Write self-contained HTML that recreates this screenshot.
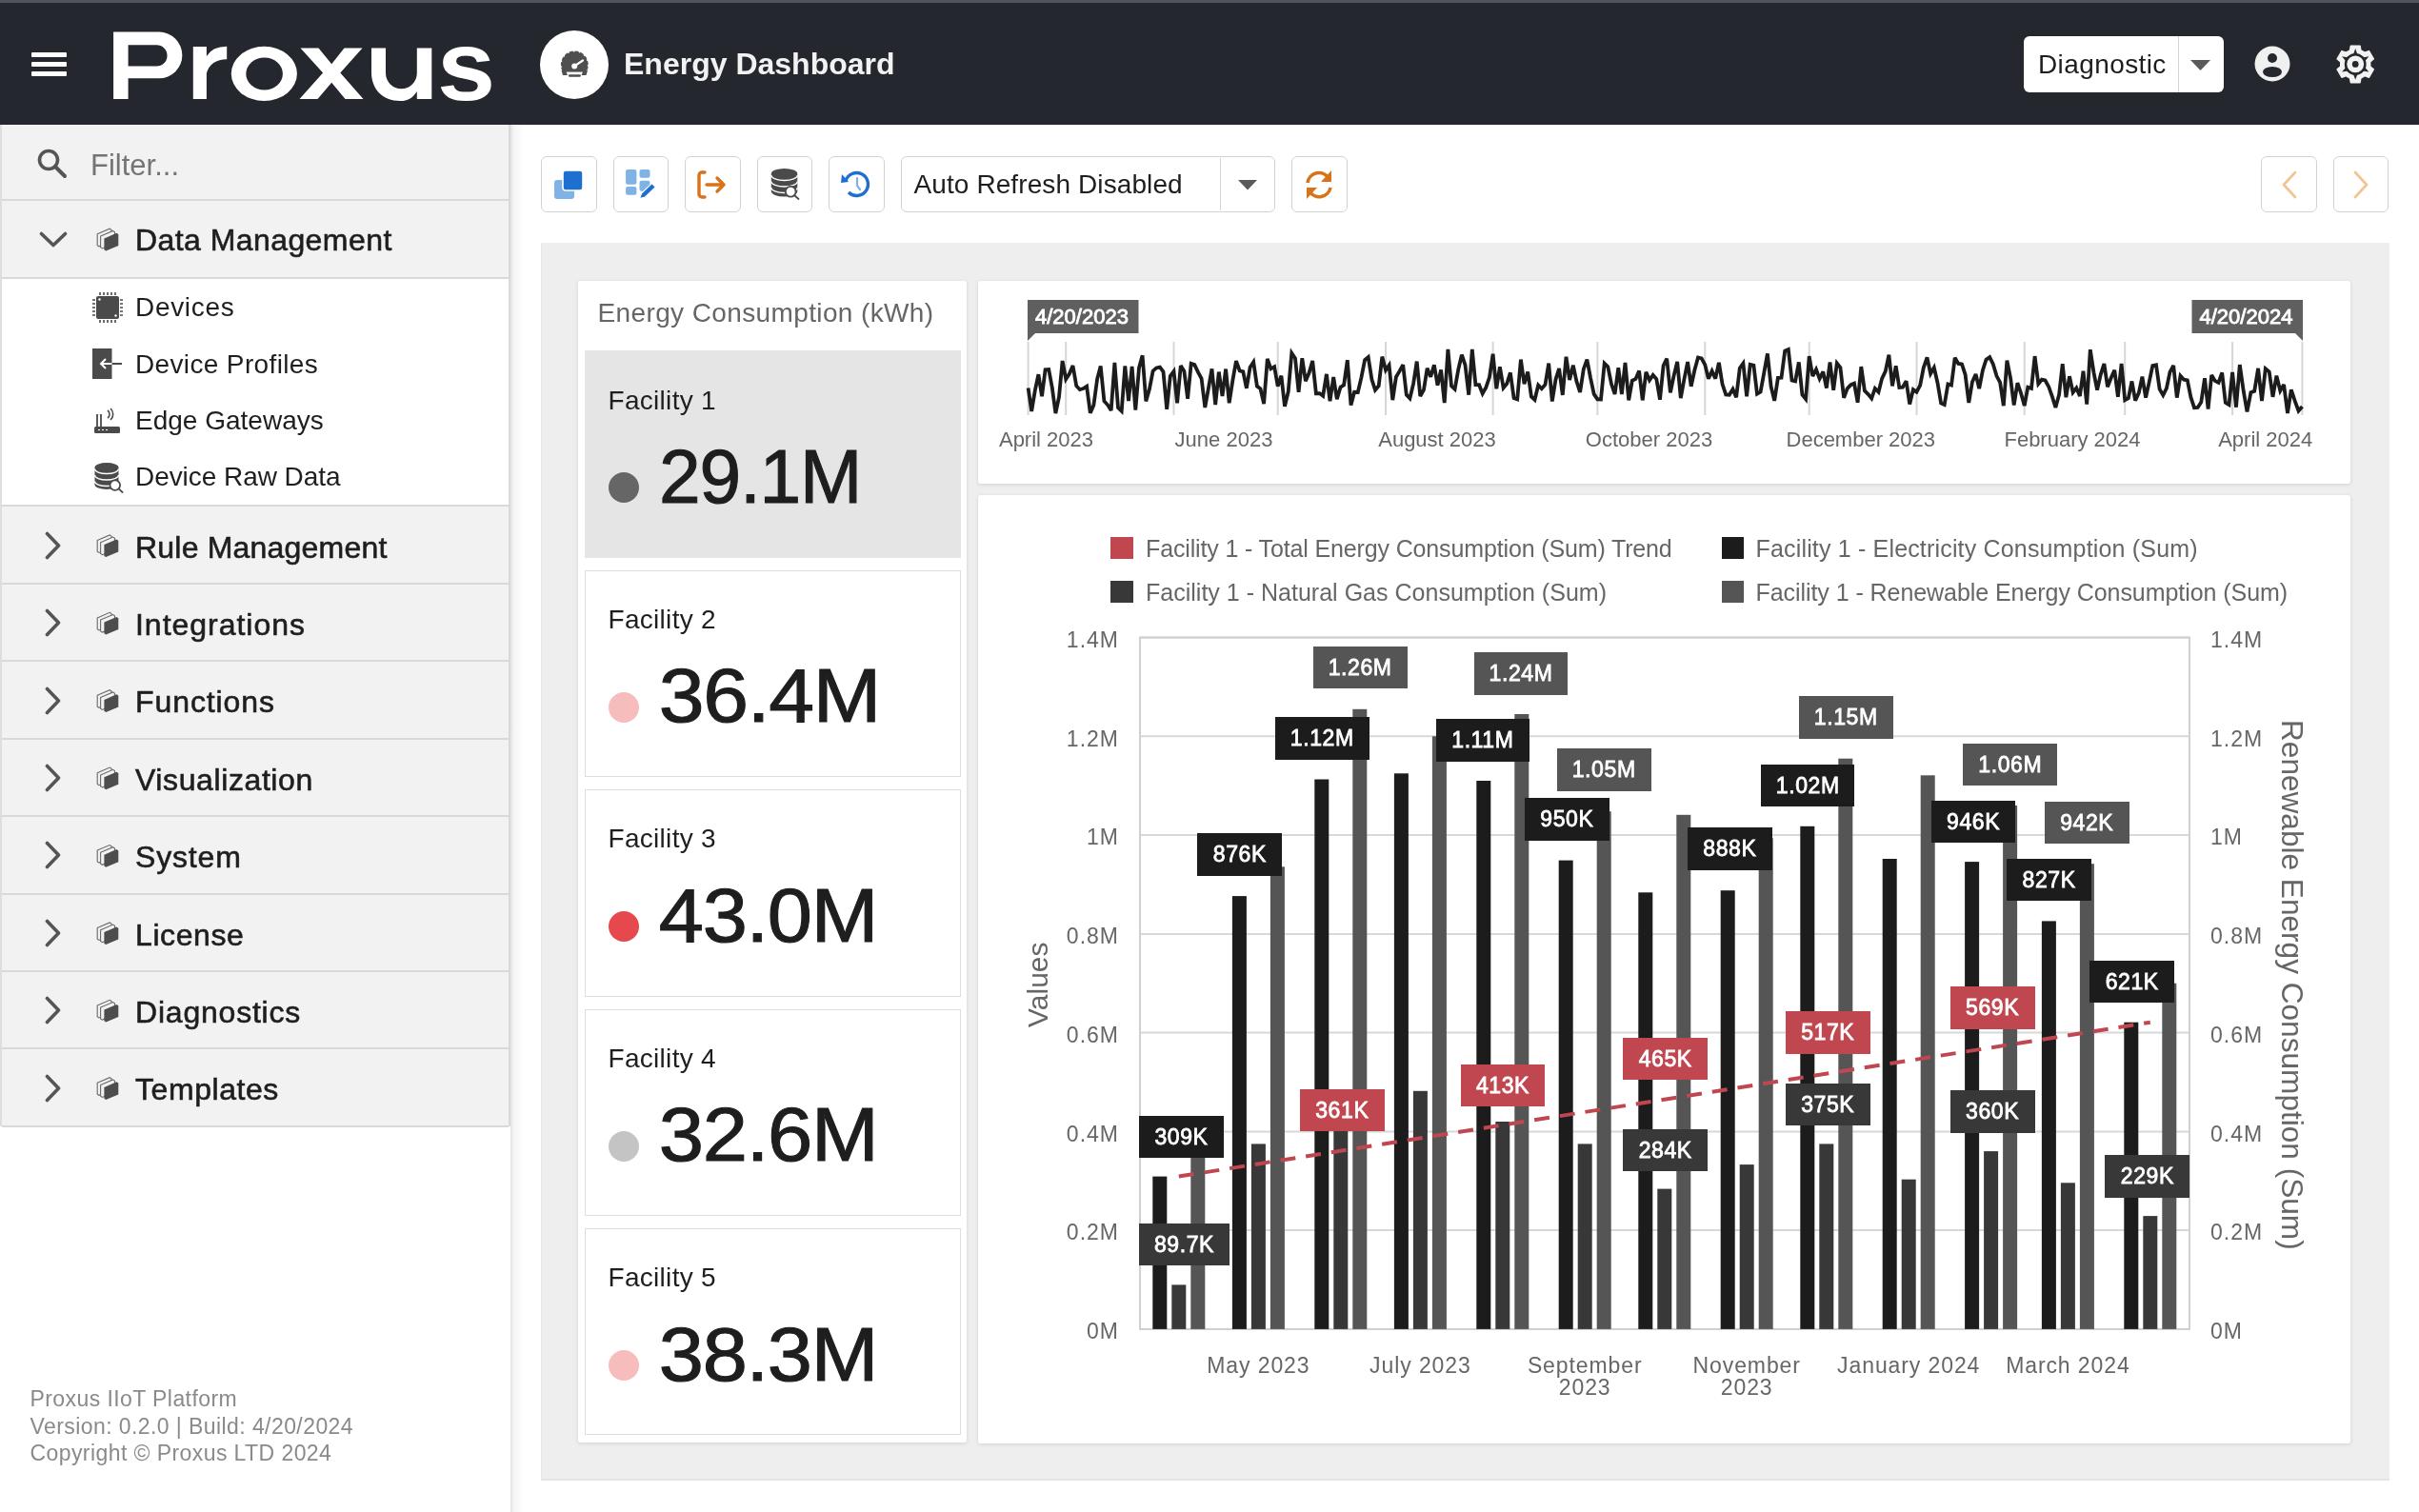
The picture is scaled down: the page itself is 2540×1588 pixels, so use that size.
<!DOCTYPE html><html><head><meta charset="utf-8"><style>
*{box-sizing:border-box;margin:0;padding:0}
html,body{width:2540px;height:1588px;overflow:hidden;background:#fff;font-family:"Liberation Sans",sans-serif}
.a{position:absolute}
.t{position:absolute;white-space:nowrap;line-height:1}
body{-webkit-font-smoothing:antialiased}
#root{position:absolute;left:0;top:0;width:2540px;height:1588px;will-change:transform}
</style></head><body><div id="root"><div class="a" style="left:0;top:0;width:2540px;height:131px;background:#24282e"></div>
<div class="a" style="left:0;top:0;width:2540px;height:2.5px;background:#50555c"></div>
<div class="a" style="left:33px;top:55px;width:37px;height:5px;background:#fff;border-radius:1px"></div>
<div class="a" style="left:33px;top:65px;width:37px;height:5px;background:#fff;border-radius:1px"></div>
<div class="a" style="left:33px;top:75px;width:37px;height:5px;background:#fff;border-radius:1px"></div>
<svg class="a" style="left:0;top:0" width="540" height="131" viewBox="0 0 540 131">
<path fill="#fff" fill-rule="evenodd" d="M119.1 33.6H167A24.35 24.35 0 0 1 167 82.3H134.6V104.1H119.1Z M134.6 47.3H164.4A11.15 11.15 0 0 1 164.4 69.6H134.6Z"/>
<path fill="#fff" d="M202.8 49.1H216.9V59Q223 48.8 238.2 48.8V62.3Q221 62.5 216.9 77V104.1H202.8Z"/>
<path fill="#fff" fill-rule="evenodd" d="M242.8 77.4A34.55 28.6 0 1 0 311.9 77.4A34.55 28.6 0 1 0 242.8 77.4Z M258.3 77.55A19.3 17.05 0 1 0 296.9 77.55A19.3 17.05 0 1 0 258.3 77.55Z"/>
<path fill="#fff" d="M315.5 50.5H334.5L348.2 67.3L361.5 50.5H380.5L357.3 76.6L381.5 104.1H362.5L348.2 86.8L333.5 104.1H314.5L339.1 76.6Z"/>
<path fill="#fff" d="M390 50.5H405V76.8A16.4 16.4 0 0 0 437.8 76.8V50.5H453.3V104.1H437.8V96C433 103.5 428 106 420.5 106C401 106 390 93 390 76Z"/>
<text x="0" y="0" font-family="Liberation Sans" font-weight="700" font-size="100" fill="#fff" transform="matrix(1.1 0 0 1.044 458.95 105.06)">s</text>
</svg>
<div class="a" style="left:567px;top:31.5px;width:72px;height:72px;border-radius:50%;background:#fff"></div>
<svg class="a" style="left:580px;top:45px" width="50" height="45" viewBox="580 45 50 45">
<circle cx="603.3" cy="68" r="14.4" fill="#4f4f4f"/>
<circle cx="603.3" cy="68" r="14.4" fill="none" stroke="#fff" stroke-width="1.6" stroke-dasharray="1.6 4.4"/>
<rect x="594" y="75.6" width="19" height="20" fill="#fff"/>
<path d="M589.5 74 L594 74 L596 79 L591 79Z M617 74 L612.5 74 L610.5 79 L615.5 79Z" fill="#4f4f4f"/>
<rect x="597" y="78.2" width="12.8" height="2.6" rx="1" fill="#4f4f4f"/>
<circle cx="603.2" cy="69.4" r="3" fill="#fff"/><path d="M603.2 69.4 L612 63.5" stroke="#fff" stroke-width="2.2" stroke-linecap="round"/>
</svg>
<div class="t" style="left:655.0px;top:51.2px;font-size:32px;color:#f2f2f2;font-weight:700;letter-spacing:0px;">Energy Dashboard</div>
<div class="a" style="left:2124.5px;top:38px;width:210px;height:59px;border-radius:6px;background:#fff"></div>
<div class="a" style="left:2286.5px;top:38px;width:1.5px;height:59px;background:#d5d5d5"></div>
<svg class="a" style="left:2300px;top:63px" width="21" height="11"><path d="M0 0H21L10.5 11Z" fill="#5a5a5a"/></svg>
<div class="t" style="left:2140.0px;top:53.6px;font-size:28px;color:#1e1e1e;font-weight:400;letter-spacing:0.4px;">Diagnostic</div>
<svg class="a" style="left:2366px;top:47px" width="40" height="40" viewBox="0 0 40 40">
<circle cx="20" cy="20" r="18.5" fill="#f0f0f0"/>
<circle cx="20" cy="14" r="5" fill="#24282e"/>
<ellipse cx="20" cy="28.5" rx="10" ry="5.5" fill="#24282e"/></svg>
<svg class="a" style="left:2448px;top:42px" width="50" height="50" viewBox="2448 42 50 50">
<path d="M2467.61 52.84 L2468.41 48.19 L2477.99 48.19 L2478.79 52.84 L2483.02 55.28 L2487.44 53.65 L2492.23 61.94 L2488.61 64.96 L2488.61 69.84 L2492.23 72.86 L2487.44 81.15 L2483.02 79.52 L2478.79 81.96 L2477.99 86.61 L2468.41 86.61 L2467.61 81.96 L2463.38 79.52 L2458.96 81.15 L2454.17 72.86 L2457.79 69.84 L2457.79 64.96 L2454.17 61.94 L2458.96 53.65 L2463.38 55.28Z" fill="#f2f2f2" stroke="#f2f2f2" stroke-width="1.6" stroke-linejoin="round"/>
<circle cx="2473.2" cy="67.4" r="11.4" fill="#24282e"/><path d="M2475.50 57.40 L2473.20 51.10 L2470.90 57.40Z M2483.01 64.39 L2487.32 59.25 L2480.71 60.41Z M2480.71 74.39 L2487.32 75.55 L2483.01 70.41Z M2470.90 77.40 L2473.20 83.70 L2475.50 77.40Z M2463.39 70.41 L2459.08 75.55 L2465.69 74.39Z M2465.69 60.41 L2459.08 59.25 L2463.39 64.39Z " fill="#24282e"/>
<circle cx="2473.2" cy="67.4" r="8.9" fill="#f2f2f2"/><circle cx="2473.2" cy="67.4" r="3.4" fill="#24282e"/>
</svg>
<div class="a" style="left:0;top:131px;width:538px;height:1457px;background:#fff"></div>
<div class="a" style="left:538px;top:131px;width:11px;height:1457px;background:linear-gradient(90deg,#f1f1f1,#f7f7f7 35%,#fdfdfd 90%,#fff)"></div>
<div class="a" style="left:536px;top:131px;width:2px;height:1457px;background:#e6e6e6"></div>
<div class="a" style="left:0;top:131px;width:536px;height:1052px;background:#f2f2f2;border-left:2px solid #dedede;border-right:2px solid #d9d9d9"></div>
<svg class="a" style="left:38px;top:155px" width="34" height="34" viewBox="0 0 34 34">
<circle cx="13" cy="13" r="9.5" fill="none" stroke="#555" stroke-width="3.6"/>
<path d="M20 20 L30 30" stroke="#555" stroke-width="4" stroke-linecap="round"/></svg>
<div class="t" style="left:95.0px;top:157.8px;font-size:31px;color:#747474;font-weight:400;letter-spacing:0px;">Filter...</div>
<div class="a" style="left:2px;top:209px;width:532px;height:2px;background:#d9d9d9"></div>
<svg class="a" style="left:41px;top:243px" width="30" height="18" viewBox="0 0 30 18"><path d="M2.5 2.5 L15 14.5 L27.5 2.5" fill="none" stroke="#555" stroke-width="3.6" stroke-linecap="round" stroke-linejoin="round"/></svg>
<svg class="a" style="left:0;top:0;overflow:visible" width="1" height="1">
<polygon points="102.2,245.8 115.2,240.2 117.1,241.5 117.1,253.3 104.0,258.8 102.2,257.6" fill="#f2f2f2" stroke="#6a6a6a" stroke-width="1.1"/>
<polygon points="105.6,248.0 118.6,242.4 120.5,243.7 120.5,255.5 107.4,261.0 105.6,259.8" fill="#f2f2f2" stroke="#6a6a6a" stroke-width="1.1"/>
<polygon points="109.4,250.4 122.4,244.8 124.3,246.1 124.3,257.9 111.2,263.4 109.4,262.2" fill="#4d4d4d"/></svg>
<div class="t" style="left:142.0px;top:236.2px;font-size:32px;color:#1e1e1e;font-weight:400;letter-spacing:0.429px;-webkit-text-stroke:0.6px #1e1e1e">Data Management</div>
<div class="a" style="left:2px;top:291px;width:532px;height:2px;background:#d9d9d9"></div>
<div class="a" style="left:2px;top:293px;width:532px;height:238px;background:#fff"></div>
<div class="a" style="left:2px;top:530px;width:532px;height:2px;background:#d9d9d9"></div>
<svg class="a" style="left:97px;top:307px" width="32" height="32" viewBox="0 0 32 32"><rect x="4" y="4" width="24" height="24" rx="2" fill="#4a4a4a"/>
 <g stroke="#4a4a4a" stroke-width="1.6"><path d="M8 0V3M8 29V32M0 8H3M29 8H32"/><path d="M12 0V3M12 29V32M0 12H3M29 12H32"/><path d="M16 0V3M16 29V32M0 16H3M29 16H32"/><path d="M20 0V3M20 29V32M0 20H3M29 20H32"/><path d="M24 0V3M24 29V32M0 24H3M29 24H32"/></g>
 <circle cx="7.5" cy="7.5" r="1.2" fill="#fff"/><circle cx="24.5" cy="24.5" r="1.2" fill="#fff"/></svg>
<div class="t" style="left:142.0px;top:309.1px;font-size:28px;color:#1e1e1e;font-weight:400;letter-spacing:0.683px;">Devices</div>
<svg class="a" style="left:97px;top:366px" width="32" height="34" viewBox="0 0 32 34"><rect x="0" y="0" width="20.5" height="32" fill="#4a4a4a"/>
 <path d="M30 16H9M14 11L9 16L14 21" fill="none" stroke="#fff" stroke-width="2"/><path d="M20.5 16H31" stroke="#4a4a4a" stroke-width="2"/></svg>
<div class="t" style="left:142.0px;top:368.5px;font-size:28px;color:#1e1e1e;font-weight:400;letter-spacing:0.357px;">Device Profiles</div>
<svg class="a" style="left:98px;top:428px" width="30" height="30" viewBox="0 0 30 30"><rect x="1" y="20" width="27" height="7" rx="1.5" fill="#4a4a4a"/>
 <path d="M4 20V7M8 20V7" stroke="#4a4a4a" stroke-width="1.8"/><path d="M15 3 a5 5 0 0 1 0 8 M18 1 a8 8 0 0 1 0 12" fill="none" stroke="#4a4a4a" stroke-width="1.6"/>
 <path d="M5 23.5h2M9 23.5h2M13 23.5h2" stroke="#fff" stroke-width="1.2"/></svg>
<div class="t" style="left:142.0px;top:427.7px;font-size:28px;color:#1e1e1e;font-weight:400;letter-spacing:0.008px;">Edge Gateways</div>
<svg class="a" style="left:98px;top:485px" width="34" height="34" viewBox="0 0 34 34">
 <path d="M1.5 6a12.5 5 0 0 1 25 0V24a12.5 5 0 0 1-25 0Z" fill="#4a4a4a"/>
 <path d="M1.5 7.5a12.5 5 0 0 0 25 0M1.5 14a12.5 5 0 0 0 25 0M1.5 20.5a12.5 5 0 0 0 25 0" fill="none" stroke="#fff" stroke-width="1.3"/>
 <circle cx="22.8" cy="24.6" r="5.3" fill="#fff" stroke="#4a4a4a" stroke-width="1.8"/><path d="M26.6 28.4L30.6 32" stroke="#4a4a4a" stroke-width="1.8" stroke-linecap="round"/></svg>
<div class="t" style="left:142.0px;top:487.4px;font-size:28px;color:#1e1e1e;font-weight:400;letter-spacing:-0.057px;">Device Raw Data</div>
<svg class="a" style="left:47px;top:557.7px" width="18" height="30" viewBox="0 0 18 30"><path d="M2.5 2.5 L14.5 15 L2.5 27.5" fill="none" stroke="#555" stroke-width="3.6" stroke-linecap="round" stroke-linejoin="round"/></svg>
<svg class="a" style="left:0;top:0;overflow:visible" width="1" height="1">
<polygon points="102.2,567.5 115.2,561.9 117.1,563.2 117.1,575.0 104.0,580.5 102.2,579.3" fill="#f2f2f2" stroke="#6a6a6a" stroke-width="1.1"/>
<polygon points="105.6,569.7 118.6,564.1 120.5,565.4 120.5,577.2 107.4,582.7 105.6,581.5" fill="#f2f2f2" stroke="#6a6a6a" stroke-width="1.1"/>
<polygon points="109.4,572.1 122.4,566.5 124.3,567.8 124.3,579.6 111.2,585.1 109.4,583.9" fill="#4d4d4d"/></svg>
<div class="t" style="left:142.0px;top:558.6px;font-size:32px;color:#1e1e1e;font-weight:400;letter-spacing:0.207px;-webkit-text-stroke:0.6px #1e1e1e">Rule Management</div>
<div class="a" style="left:2px;top:611.9px;width:532px;height:2px;background:#d9d9d9"></div>
<svg class="a" style="left:47px;top:639.1px" width="18" height="30" viewBox="0 0 18 30"><path d="M2.5 2.5 L14.5 15 L2.5 27.5" fill="none" stroke="#555" stroke-width="3.6" stroke-linecap="round" stroke-linejoin="round"/></svg>
<svg class="a" style="left:0;top:0;overflow:visible" width="1" height="1">
<polygon points="102.2,648.9 115.2,643.3 117.1,644.6 117.1,656.4 104.0,661.9 102.2,660.7" fill="#f2f2f2" stroke="#6a6a6a" stroke-width="1.1"/>
<polygon points="105.6,651.1 118.6,645.5 120.5,646.8 120.5,658.6 107.4,664.1 105.6,662.9" fill="#f2f2f2" stroke="#6a6a6a" stroke-width="1.1"/>
<polygon points="109.4,653.5 122.4,647.9 124.3,649.2 124.3,661.0 111.2,666.5 109.4,665.3" fill="#4d4d4d"/></svg>
<div class="t" style="left:142.0px;top:640.0px;font-size:32px;color:#1e1e1e;font-weight:400;letter-spacing:0.973px;-webkit-text-stroke:0.6px #1e1e1e">Integrations</div>
<div class="a" style="left:2px;top:693.3px;width:532px;height:2px;background:#d9d9d9"></div>
<svg class="a" style="left:47px;top:720.5px" width="18" height="30" viewBox="0 0 18 30"><path d="M2.5 2.5 L14.5 15 L2.5 27.5" fill="none" stroke="#555" stroke-width="3.6" stroke-linecap="round" stroke-linejoin="round"/></svg>
<svg class="a" style="left:0;top:0;overflow:visible" width="1" height="1">
<polygon points="102.2,730.3 115.2,724.7 117.1,726.0 117.1,737.8 104.0,743.3 102.2,742.1" fill="#f2f2f2" stroke="#6a6a6a" stroke-width="1.1"/>
<polygon points="105.6,732.5 118.6,726.9 120.5,728.2 120.5,740.0 107.4,745.5 105.6,744.3" fill="#f2f2f2" stroke="#6a6a6a" stroke-width="1.1"/>
<polygon points="109.4,734.9 122.4,729.3 124.3,730.6 124.3,742.4 111.2,747.9 109.4,746.7" fill="#4d4d4d"/></svg>
<div class="t" style="left:142.0px;top:721.4px;font-size:32px;color:#1e1e1e;font-weight:400;letter-spacing:0.912px;-webkit-text-stroke:0.6px #1e1e1e">Functions</div>
<div class="a" style="left:2px;top:774.7px;width:532px;height:2px;background:#d9d9d9"></div>
<svg class="a" style="left:47px;top:801.9px" width="18" height="30" viewBox="0 0 18 30"><path d="M2.5 2.5 L14.5 15 L2.5 27.5" fill="none" stroke="#555" stroke-width="3.6" stroke-linecap="round" stroke-linejoin="round"/></svg>
<svg class="a" style="left:0;top:0;overflow:visible" width="1" height="1">
<polygon points="102.2,811.7 115.2,806.1 117.1,807.4 117.1,819.2 104.0,824.7 102.2,823.5" fill="#f2f2f2" stroke="#6a6a6a" stroke-width="1.1"/>
<polygon points="105.6,813.9 118.6,808.3 120.5,809.6 120.5,821.4 107.4,826.9 105.6,825.7" fill="#f2f2f2" stroke="#6a6a6a" stroke-width="1.1"/>
<polygon points="109.4,816.3 122.4,810.7 124.3,812.0 124.3,823.8 111.2,829.3 109.4,828.1" fill="#4d4d4d"/></svg>
<div class="t" style="left:142.0px;top:802.8px;font-size:32px;color:#1e1e1e;font-weight:400;letter-spacing:0.6px;-webkit-text-stroke:0.6px #1e1e1e">Visualization</div>
<div class="a" style="left:2px;top:856.1px;width:532px;height:2px;background:#d9d9d9"></div>
<svg class="a" style="left:47px;top:883.3px" width="18" height="30" viewBox="0 0 18 30"><path d="M2.5 2.5 L14.5 15 L2.5 27.5" fill="none" stroke="#555" stroke-width="3.6" stroke-linecap="round" stroke-linejoin="round"/></svg>
<svg class="a" style="left:0;top:0;overflow:visible" width="1" height="1">
<polygon points="102.2,893.1 115.2,887.5 117.1,888.8 117.1,900.6 104.0,906.1 102.2,904.9" fill="#f2f2f2" stroke="#6a6a6a" stroke-width="1.1"/>
<polygon points="105.6,895.3 118.6,889.7 120.5,891.0 120.5,902.8 107.4,908.3 105.6,907.1" fill="#f2f2f2" stroke="#6a6a6a" stroke-width="1.1"/>
<polygon points="109.4,897.7 122.4,892.1 124.3,893.4 124.3,905.2 111.2,910.7 109.4,909.5" fill="#4d4d4d"/></svg>
<div class="t" style="left:142.0px;top:884.2px;font-size:32px;color:#1e1e1e;font-weight:400;letter-spacing:0.84px;-webkit-text-stroke:0.6px #1e1e1e">System</div>
<div class="a" style="left:2px;top:937.5px;width:532px;height:2px;background:#d9d9d9"></div>
<svg class="a" style="left:47px;top:964.6999999999999px" width="18" height="30" viewBox="0 0 18 30"><path d="M2.5 2.5 L14.5 15 L2.5 27.5" fill="none" stroke="#555" stroke-width="3.6" stroke-linecap="round" stroke-linejoin="round"/></svg>
<svg class="a" style="left:0;top:0;overflow:visible" width="1" height="1">
<polygon points="102.2,974.5 115.2,968.9 117.1,970.2 117.1,982.0 104.0,987.5 102.2,986.3" fill="#f2f2f2" stroke="#6a6a6a" stroke-width="1.1"/>
<polygon points="105.6,976.7 118.6,971.1 120.5,972.4 120.5,984.2 107.4,989.7 105.6,988.5" fill="#f2f2f2" stroke="#6a6a6a" stroke-width="1.1"/>
<polygon points="109.4,979.1 122.4,973.5 124.3,974.8 124.3,986.6 111.2,992.1 109.4,990.9" fill="#4d4d4d"/></svg>
<div class="t" style="left:142.0px;top:965.6px;font-size:32px;color:#1e1e1e;font-weight:400;letter-spacing:0.6px;-webkit-text-stroke:0.6px #1e1e1e">License</div>
<div class="a" style="left:2px;top:1018.9px;width:532px;height:2px;background:#d9d9d9"></div>
<svg class="a" style="left:47px;top:1046.1px" width="18" height="30" viewBox="0 0 18 30"><path d="M2.5 2.5 L14.5 15 L2.5 27.5" fill="none" stroke="#555" stroke-width="3.6" stroke-linecap="round" stroke-linejoin="round"/></svg>
<svg class="a" style="left:0;top:0;overflow:visible" width="1" height="1">
<polygon points="102.2,1055.9 115.2,1050.3 117.1,1051.6 117.1,1063.4 104.0,1068.9 102.2,1067.7" fill="#f2f2f2" stroke="#6a6a6a" stroke-width="1.1"/>
<polygon points="105.6,1058.1 118.6,1052.5 120.5,1053.8 120.5,1065.6 107.4,1071.1 105.6,1069.9" fill="#f2f2f2" stroke="#6a6a6a" stroke-width="1.1"/>
<polygon points="109.4,1060.5 122.4,1054.9 124.3,1056.2 124.3,1068.0 111.2,1073.5 109.4,1072.3" fill="#4d4d4d"/></svg>
<div class="t" style="left:142.0px;top:1047.0px;font-size:32px;color:#1e1e1e;font-weight:400;letter-spacing:0.79px;-webkit-text-stroke:0.6px #1e1e1e">Diagnostics</div>
<div class="a" style="left:2px;top:1100.3px;width:532px;height:2px;background:#d9d9d9"></div>
<svg class="a" style="left:47px;top:1127.5px" width="18" height="30" viewBox="0 0 18 30"><path d="M2.5 2.5 L14.5 15 L2.5 27.5" fill="none" stroke="#555" stroke-width="3.6" stroke-linecap="round" stroke-linejoin="round"/></svg>
<svg class="a" style="left:0;top:0;overflow:visible" width="1" height="1">
<polygon points="102.2,1137.3 115.2,1131.7 117.1,1133.0 117.1,1144.8 104.0,1150.3 102.2,1149.1" fill="#f2f2f2" stroke="#6a6a6a" stroke-width="1.1"/>
<polygon points="105.6,1139.5 118.6,1133.9 120.5,1135.2 120.5,1147.0 107.4,1152.5 105.6,1151.3" fill="#f2f2f2" stroke="#6a6a6a" stroke-width="1.1"/>
<polygon points="109.4,1141.9 122.4,1136.3 124.3,1137.6 124.3,1149.4 111.2,1154.9 109.4,1153.7" fill="#4d4d4d"/></svg>
<div class="t" style="left:142.0px;top:1128.4px;font-size:32px;color:#1e1e1e;font-weight:400;letter-spacing:0.562px;-webkit-text-stroke:0.6px #1e1e1e">Templates</div>
<div class="a" style="left:2px;top:1181.7px;width:532px;height:2px;background:#d9d9d9"></div>
<div class="t" style="left:31.5px;top:1458.3px;font-size:23px;color:#8a8a8a;font-weight:400;letter-spacing:0.42px;">Proxus IIoT Platform</div>
<div class="t" style="left:31.5px;top:1486.5px;font-size:23px;color:#8a8a8a;font-weight:400;letter-spacing:0.42px;">Version: 0.2.0 | Build: 4/20/2024</div>
<div class="t" style="left:31.5px;top:1514.7px;font-size:23px;color:#8a8a8a;font-weight:400;letter-spacing:0.42px;">Copyright © Proxus LTD 2024</div>
<div class="a" style="left:568px;top:164.3px;width:58.5px;height:58.5px;border:1.8px solid #d2d2d2;border-radius:6px;background:#fff"></div>
<div class="a" style="left:643.5px;top:164.3px;width:58.5px;height:58.5px;border:1.8px solid #d2d2d2;border-radius:6px;background:#fff"></div>
<div class="a" style="left:719px;top:164.3px;width:58.5px;height:58.5px;border:1.8px solid #d2d2d2;border-radius:6px;background:#fff"></div>
<div class="a" style="left:794.5px;top:164.3px;width:58.5px;height:58.5px;border:1.8px solid #d2d2d2;border-radius:6px;background:#fff"></div>
<div class="a" style="left:870px;top:164.3px;width:58.5px;height:58.5px;border:1.8px solid #d2d2d2;border-radius:6px;background:#fff"></div>
<svg class="a" style="left:580px;top:177px" width="34" height="34" viewBox="0 0 34 34">
<rect x="2" y="12" width="21" height="20" rx="3" fill="#7fb2e5"/><rect x="11" y="2" width="21" height="21" rx="3" fill="#1e6fd0" stroke="#fff" stroke-width="1.6"/>
<rect x="9" y="10" width="25" height="15" fill="none"/></svg>
<svg class="a" style="left:656px;top:177px" width="36" height="36" viewBox="0 0 36 36">
<rect x="1.1" y="1" width="11.3" height="15.8" rx="2" fill="#7fb2e5"/><rect x="1.1" y="19.1" width="11.3" height="8.7" rx="2" fill="#7fb2e5"/>
<rect x="15.5" y="1" width="11" height="8.7" rx="2" fill="#7fb2e5"/><rect x="15.5" y="12.8" width="11" height="11" rx="2" fill="#7fb2e5"/>
<path d="M15.5 31.5 L17.5 26 L28.5 15.5 L32.5 19.5 L21.5 30Z" fill="#1e6fd0" stroke="#fff" stroke-width="1.2"/></svg>
<svg class="a" style="left:731px;top:178px" width="34" height="32" viewBox="0 0 34 32">
<path d="M9 3H6a3 3 0 0 0-3 3v20a3 3 0 0 0 3 3h3" fill="none" stroke="#d9731a" stroke-width="3.4" stroke-linecap="round"/>
<path d="M11 16H29M22 9L29 16L22 23" fill="none" stroke="#d9731a" stroke-width="3.4" stroke-linecap="round" stroke-linejoin="round"/></svg>
<svg class="a" style="left:807px;top:175px" width="36" height="36" viewBox="0 0 36 36">
 <path d="M2.8 7.5a13.75 5.5 0 0 1 27.5 0V26a13.75 5.5 0 0 1-27.5 0Z" fill="#4a4a4a"/>
 <path d="M2.8 9a13.75 5.5 0 0 0 27.5 0M2.8 15.5a13.75 5.5 0 0 0 27.5 0M2.8 22a13.75 5.5 0 0 0 27.5 0" fill="none" stroke="#fff" stroke-width="1.4"/>
 <circle cx="23.2" cy="26.2" r="5.4" fill="#fff" stroke="#4a4a4a" stroke-width="1.8"/><path d="M27 30L31.5 34" stroke="#4a4a4a" stroke-width="1.8" stroke-linecap="round"/></svg>
<svg class="a" style="left:882px;top:177px" width="34" height="34" viewBox="0 0 34 34">
<path d="M6 13 A12 12 0 1 1 9 25" fill="none" stroke="#1e6fd0" stroke-width="3.4"/>
<path d="M2 6 L9 14 L1 15Z" fill="#1e6fd0"/>
<path d="M18 10V18L21 22" fill="none" stroke="#7fb2e5" stroke-width="2.2" stroke-linecap="round"/></svg>
<div class="a" style="left:945.5px;top:164.3px;width:393px;height:58.5px;border:1.8px solid #d2d2d2;border-radius:6px;background:#fff"></div>
<div class="a" style="left:1280.5px;top:166px;width:1.5px;height:55px;background:#d4d4d4"></div>
<svg class="a" style="left:1299.5px;top:189px" width="20" height="10.5"><path d="M0 0H20L10 10.5Z" fill="#5a5a5a"/></svg>
<div class="t" style="left:959.5px;top:179.5px;font-size:28px;color:#1e1e1e;font-weight:400;letter-spacing:0.1px;">Auto Refresh Disabled</div>
<div class="a" style="left:1356px;top:164.3px;width:58.5px;height:58.5px;border:1.8px solid #d2d2d2;border-radius:6px;background:#fff"></div>
<svg class="a" style="left:1368px;top:178px" width="34" height="32" viewBox="0 0 34 32">
<path d="M5 14 A12 12 0 0 1 27 9" fill="none" stroke="#d9731a" stroke-width="3.6"/>
<path d="M29 19 A12 12 0 0 1 7 23" fill="none" stroke="#d9731a" stroke-width="3.6"/>
<path d="M30 1 V13 H19Z" fill="#d9731a"/><path d="M4 31 V19 H15Z" fill="#d9731a"/></svg>
<div class="a" style="left:2374px;top:164.3px;width:58.5px;height:58.5px;border:1.8px solid #d2d2d2;border-radius:6px;background:#fff"></div>
<div class="a" style="left:2449.5px;top:164.3px;width:58.5px;height:58.5px;border:1.8px solid #d2d2d2;border-radius:6px;background:#fff"></div>
<svg class="a" style="left:2393px;top:178px" width="22" height="32"><path d="M17 3 L5 16 L17 29" fill="none" stroke="#f2c490" stroke-width="2.7" stroke-linecap="round" stroke-linejoin="round"/></svg>
<svg class="a" style="left:2468px;top:178px" width="22" height="32"><path d="M5 3 L17 16 L5 29" fill="none" stroke="#f2c490" stroke-width="2.7" stroke-linecap="round" stroke-linejoin="round"/></svg>
<div class="a" style="left:568px;top:255px;width:1941px;height:1300px;background:#eeeeee;border-bottom:2px solid #e2e3e3;border-left:1.5px solid #e5e5e5"></div>
<div class="a" style="left:607px;top:294.5px;width:408px;height:1220px;background:#fff;border-radius:3px;box-shadow:0 1px 4px rgba(0,0,0,0.12)"></div>
<div class="t" style="left:627.5px;top:315.4px;font-size:28px;color:#666;font-weight:400;letter-spacing:0.38px;">Energy Consumption (kWh)</div>
<div class="a" style="left:613.5px;top:368.3px;width:395px;height:217.5px;background:#e5e5e5"></div>
<div class="t" style="left:638.5px;top:406.6px;font-size:28px;color:#1e1e1e;font-weight:400;letter-spacing:0.3px;">Facility 1</div>
<div class="a" style="left:639px;top:496.3px;width:32px;height:32px;border-radius:50%;background:#666666"></div>
<div class="t" style="left:692.0px;top:460.9px;font-size:80px;color:#1e1e1e;font-weight:400;letter-spacing:-1.2px;-webkit-text-stroke:1.1px #1e1e1e;transform-origin:3px 0;transform:scaleX(0.98)">29.1M</div>
<div class="a" style="left:613.5px;top:598.7px;width:395px;height:217.5px;background:#fff;border:1.5px solid #dedede"></div>
<div class="t" style="left:638.5px;top:637.0px;font-size:28px;color:#1e1e1e;font-weight:400;letter-spacing:0.3px;">Facility 2</div>
<div class="a" style="left:639px;top:726.7px;width:32px;height:32px;border-radius:50%;background:#f7bcbc"></div>
<div class="t" style="left:692.0px;top:691.3px;font-size:80px;color:#1e1e1e;font-weight:400;letter-spacing:-1.2px;-webkit-text-stroke:1.1px #1e1e1e;transform-origin:3px 0;transform:scaleX(1.073)">36.4M</div>
<div class="a" style="left:613.5px;top:829.1px;width:395px;height:217.5px;background:#fff;border:1.5px solid #dedede"></div>
<div class="t" style="left:638.5px;top:867.4px;font-size:28px;color:#1e1e1e;font-weight:400;letter-spacing:0.3px;">Facility 3</div>
<div class="a" style="left:639px;top:957.1px;width:32px;height:32px;border-radius:50%;background:#e5484d"></div>
<div class="t" style="left:692.0px;top:921.7px;font-size:80px;color:#1e1e1e;font-weight:400;letter-spacing:-1.2px;-webkit-text-stroke:1.1px #1e1e1e;transform-origin:3px 0;transform:scaleX(1.059)">43.0M</div>
<div class="a" style="left:613.5px;top:1059.5px;width:395px;height:217.5px;background:#fff;border:1.5px solid #dedede"></div>
<div class="t" style="left:638.5px;top:1097.8px;font-size:28px;color:#1e1e1e;font-weight:400;letter-spacing:0.3px;">Facility 4</div>
<div class="a" style="left:639px;top:1187.5px;width:32px;height:32px;border-radius:50%;background:#c4c4c4"></div>
<div class="t" style="left:692.0px;top:1152.1px;font-size:80px;color:#1e1e1e;font-weight:400;letter-spacing:-1.2px;-webkit-text-stroke:1.1px #1e1e1e;transform-origin:3px 0;transform:scaleX(1.062)">32.6M</div>
<div class="a" style="left:613.5px;top:1289.9px;width:395px;height:217.5px;background:#fff;border:1.5px solid #dedede"></div>
<div class="t" style="left:638.5px;top:1328.2px;font-size:28px;color:#1e1e1e;font-weight:400;letter-spacing:0.3px;">Facility 5</div>
<div class="a" style="left:639px;top:1417.9px;width:32px;height:32px;border-radius:50%;background:#f7bcbc"></div>
<div class="t" style="left:692.0px;top:1382.5px;font-size:80px;color:#1e1e1e;font-weight:400;letter-spacing:-1.2px;-webkit-text-stroke:1.1px #1e1e1e;transform-origin:3px 0;transform:scaleX(1.059)">38.3M</div>
<div class="a" style="left:1027px;top:295px;width:1441px;height:212.5px;background:#fff;border-radius:3px;box-shadow:0 1px 4px rgba(0,0,0,0.12)"></div>
<svg class="a" style="left:0;top:0" width="2540" height="1588"><line x1="1079.6" y1="359" x2="1079.6" y2="436" stroke="#d6d6d6" stroke-width="2"/><line x1="1119.2" y1="359" x2="1119.2" y2="436" stroke="#d6d6d6" stroke-width="2"/><line x1="1232.5" y1="359" x2="1232.5" y2="436" stroke="#d6d6d6" stroke-width="2"/><line x1="1341.7" y1="359" x2="1341.7" y2="436" stroke="#d6d6d6" stroke-width="2"/><line x1="1455.0" y1="359" x2="1455.0" y2="436" stroke="#d6d6d6" stroke-width="2"/><line x1="1567.6" y1="359" x2="1567.6" y2="436" stroke="#d6d6d6" stroke-width="2"/><line x1="1677.4" y1="359" x2="1677.4" y2="436" stroke="#d6d6d6" stroke-width="2"/><line x1="1790.3" y1="359" x2="1790.3" y2="436" stroke="#d6d6d6" stroke-width="2"/><line x1="1899.7" y1="359" x2="1899.7" y2="436" stroke="#d6d6d6" stroke-width="2"/><line x1="2012.5" y1="359" x2="2012.5" y2="436" stroke="#d6d6d6" stroke-width="2"/><line x1="2125.7" y1="359" x2="2125.7" y2="436" stroke="#d6d6d6" stroke-width="2"/><line x1="2231.2" y1="359" x2="2231.2" y2="436" stroke="#d6d6d6" stroke-width="2"/><line x1="2344.1" y1="359" x2="2344.1" y2="436" stroke="#d6d6d6" stroke-width="2"/><line x1="2417.4" y1="359" x2="2417.4" y2="436" stroke="#d6d6d6" stroke-width="2"/><polyline points="1079.6,407.5 1083.2,431.9 1086.8,410.2 1090.4,393.2 1094.0,416.3 1097.6,388.3 1101.2,388.0 1104.8,407.2 1108.4,434.0 1112.0,416.9 1115.6,379.0 1119.2,398.2 1122.9,392.5 1126.5,384.0 1130.2,405.2 1133.8,409.2 1137.5,408.1 1141.1,405.7 1144.8,433.7 1148.4,425.4 1152.1,398.0 1155.7,384.5 1159.4,421.2 1163.1,425.3 1166.7,431.0 1170.4,381.0 1174.0,428.2 1177.7,431.8 1181.3,384.5 1185.0,421.0 1188.6,385.0 1192.3,430.5 1196.0,386.3 1199.6,373.3 1203.3,421.4 1206.9,408.9 1210.6,389.7 1214.2,386.4 1217.9,385.6 1221.5,390.5 1225.2,429.8 1228.8,395.0 1232.5,390.0 1236.1,423.4 1239.8,384.1 1243.4,389.8 1247.1,418.8 1250.7,381.9 1254.3,383.1 1258.0,390.9 1261.6,397.5 1265.3,427.9 1268.9,407.8 1272.5,387.4 1276.2,425.0 1279.8,390.6 1283.5,416.0 1287.1,387.6 1290.7,423.2 1294.4,399.1 1298.0,379.1 1301.7,389.4 1305.3,390.3 1308.9,407.8 1312.6,385.8 1316.2,380.2 1319.9,405.6 1323.5,408.3 1327.1,424.0 1330.8,377.0 1334.4,387.3 1338.1,385.2 1341.7,405.6 1345.4,394.6 1349.0,426.7 1352.7,411.5 1356.3,370.8 1360.0,376.3 1363.6,411.8 1367.3,376.3 1370.9,400.2 1374.6,391.6 1378.2,378.9 1381.9,413.2 1385.6,413.1 1389.2,415.9 1392.9,392.9 1396.5,421.3 1400.2,396.1 1403.8,419.2 1407.5,406.7 1411.1,404.4 1414.8,378.2 1418.5,425.6 1422.1,411.8 1425.8,412.0 1429.4,396.6 1433.1,378.0 1436.7,375.1 1440.4,398.5 1444.0,409.7 1447.7,405.3 1451.3,374.6 1455.0,388.8 1458.6,383.6 1462.3,420.1 1465.9,395.9 1469.5,389.9 1473.2,383.1 1476.8,414.6 1480.4,418.4 1484.1,402.9 1487.7,379.6 1491.3,416.0 1495.0,409.4 1498.6,386.7 1502.2,395.7 1505.9,383.3 1509.5,404.7 1513.1,388.5 1516.7,423.1 1520.4,367.0 1524.0,405.3 1527.6,408.7 1531.3,387.8 1534.9,372.7 1538.5,383.3 1542.2,414.7 1545.8,367.0 1549.4,404.2 1553.1,404.2 1556.7,413.4 1560.3,406.9 1564.0,396.0 1567.6,371.8 1571.3,408.3 1574.9,385.3 1578.6,407.3 1582.2,403.0 1585.9,391.4 1589.6,418.1 1593.2,419.4 1596.9,377.6 1600.5,403.3 1604.2,390.4 1607.9,416.5 1611.5,419.8 1615.2,404.5 1618.8,408.2 1622.5,404.0 1626.2,381.6 1629.8,421.5 1633.5,398.4 1637.1,387.1 1640.8,414.9 1644.5,374.7 1648.1,399.0 1651.8,383.7 1655.4,400.4 1659.1,411.9 1662.8,387.7 1666.4,377.6 1670.1,397.1 1673.7,413.9 1677.4,419.4 1681.0,419.5 1684.7,381.7 1688.3,385.2 1692.0,403.3 1695.6,414.0 1699.3,386.3 1702.9,414.0 1706.5,380.9 1710.2,420.4 1713.8,399.8 1717.5,397.9 1721.1,389.5 1724.7,420.4 1728.4,390.8 1732.0,399.3 1735.7,393.9 1739.3,398.0 1743.0,419.8 1746.6,384.0 1750.2,376.6 1753.9,412.4 1757.5,394.8 1761.2,380.0 1764.8,418.1 1768.4,398.5 1772.1,380.1 1775.7,405.8 1779.4,388.5 1783.0,375.5 1786.7,376.4 1790.3,383.1 1793.9,397.7 1797.6,389.6 1801.2,397.6 1804.9,380.8 1808.5,403.3 1812.2,414.4 1815.8,414.7 1819.5,408.7 1823.1,417.2 1826.8,386.6 1830.4,381.6 1834.1,416.4 1837.7,382.8 1841.4,383.8 1845.0,413.6 1848.6,411.5 1852.3,391.4 1855.9,371.4 1859.6,406.0 1863.2,420.9 1866.9,396.9 1870.5,396.7 1874.2,368.5 1877.8,367.0 1881.5,399.4 1885.1,400.3 1888.8,380.4 1892.4,414.5 1896.1,419.1 1899.7,374.1 1903.3,395.0 1907.0,388.0 1910.6,397.8 1914.3,390.3 1917.9,407.6 1921.5,380.6 1925.2,409.7 1928.8,381.4 1932.4,386.0 1936.1,417.8 1939.7,408.1 1943.4,404.2 1947.0,402.7 1950.6,422.7 1954.3,385.1 1957.9,410.4 1961.6,414.1 1965.2,418.4 1968.8,408.0 1972.5,411.7 1976.1,397.6 1979.8,389.8 1983.4,372.7 1987.0,405.4 1990.7,384.3 1994.3,407.0 1997.9,406.7 2001.6,400.2 2005.2,424.5 2008.9,409.1 2012.5,411.6 2016.2,404.7 2019.8,386.1 2023.5,375.5 2027.1,392.5 2030.8,386.1 2034.4,401.7 2038.1,423.5 2041.7,425.0 2045.4,403.4 2049.0,404.5 2052.7,375.8 2056.3,381.9 2060.0,382.4 2063.6,393.5 2067.3,423.0 2070.9,401.3 2074.6,393.0 2078.2,408.1 2081.9,388.9 2085.5,377.6 2089.2,375.1 2092.8,382.5 2096.5,394.8 2100.1,401.5 2103.8,426.1 2107.4,378.6 2111.1,397.2 2114.7,425.5 2118.4,402.2 2122.0,412.7 2125.7,426.1 2129.3,406.7 2133.0,407.9 2136.6,374.1 2140.3,403.1 2143.9,398.7 2147.5,399.5 2151.2,406.2 2154.8,416.4 2158.4,428.0 2162.1,414.4 2165.7,382.2 2169.4,417.2 2173.0,395.2 2176.6,412.2 2180.3,407.5 2183.9,416.0 2187.5,389.8 2191.2,424.6 2194.8,367.2 2198.5,391.3 2202.1,409.7 2205.7,393.6 2209.4,382.0 2213.0,406.3 2216.6,397.1 2220.3,388.8 2223.9,416.7 2227.6,381.9 2231.2,420.3 2234.8,418.3 2238.5,400.5 2242.1,420.6 2245.8,412.6 2249.4,395.6 2253.1,417.6 2256.7,401.2 2260.3,384.1 2264.0,383.3 2267.6,408.6 2271.3,415.0 2274.9,407.8 2278.5,390.7 2282.2,384.0 2285.8,417.6 2289.5,394.7 2293.1,398.7 2296.8,399.3 2300.4,417.2 2304.0,428.2 2307.7,428.0 2311.3,422.4 2315.0,397.3 2318.6,429.5 2322.2,393.9 2325.9,400.1 2329.5,401.8 2333.2,391.5 2336.8,422.9 2340.5,425.1 2344.1,390.9 2348.0,427.7 2351.8,383.1 2355.7,410.4 2359.5,432.5 2363.4,412.1 2367.2,410.9 2371.1,386.9 2375.0,421.0 2378.8,387.2 2382.7,390.4 2386.5,416.8 2390.4,394.6 2394.3,410.4 2398.1,403.9 2402.0,433.9 2405.8,409.3 2409.7,421.2 2413.5,431.5 2417.4,427.0" fill="none" stroke="#1c1c1c" stroke-width="3.8" stroke-linejoin="miter" stroke-miterlimit="3"/><path d="M1079 315H1195.5V350H1087L1079 358Z" fill="#5f5f5f"/><path d="M2301.5 315H2418V358L2410 350H2301.5Z" fill="#5f5f5f"/></svg>
<div class="t" style="left:1087.0px;top:322.1px;font-size:22px;color:#fff;font-weight:400;letter-spacing:0px;-webkit-text-stroke:0.9px #fff">4/20/2023</div>
<div class="t" style="left:2309.5px;top:322.1px;font-size:22px;color:#fff;font-weight:400;letter-spacing:0px;-webkit-text-stroke:0.9px #fff">4/20/2024</div>
<div class="t" style="left:948.5px;width:300px;text-align:center;top:451.1px;font-size:22px;color:#666">April 2023</div>
<div class="t" style="left:1135.0px;width:300px;text-align:center;top:451.1px;font-size:22px;color:#666">June 2023</div>
<div class="t" style="left:1359.0px;width:300px;text-align:center;top:451.1px;font-size:22px;color:#666">August 2023</div>
<div class="t" style="left:1581.5px;width:300px;text-align:center;top:451.1px;font-size:22px;color:#666">October 2023</div>
<div class="t" style="left:1803.8px;width:300px;text-align:center;top:451.1px;font-size:22px;color:#666">December 2023</div>
<div class="t" style="left:2026.0px;width:300px;text-align:center;top:451.1px;font-size:22px;color:#666">February 2024</div>
<div class="t" style="left:2228.7px;width:300px;text-align:center;top:451.1px;font-size:22px;color:#666">April 2024</div>
<div class="a" style="left:1027px;top:520px;width:1441px;height:995.5px;background:#fff;border-radius:3px;box-shadow:0 1px 4px rgba(0,0,0,0.12)"></div>
<div class="a" style="left:1166px;top:564.3px;width:23.5px;height:23px;background:#c0474f"></div>
<div class="t" style="left:1203.0px;top:563.8px;font-size:25px;color:#666;font-weight:400;letter-spacing:-0.14px;">Facility 1 - Total Energy Consumption (Sum) Trend</div>
<div class="a" style="left:1807.5px;top:564.3px;width:23.5px;height:23px;background:#1c1c1c"></div>
<div class="t" style="left:1843.5px;top:563.8px;font-size:25px;color:#666;font-weight:400;letter-spacing:0.17px;">Facility 1 - Electricity Consumption (Sum)</div>
<div class="a" style="left:1166px;top:610px;width:23.5px;height:23px;background:#383838"></div>
<div class="t" style="left:1203.0px;top:609.5px;font-size:25px;color:#666;font-weight:400;letter-spacing:0.012px;">Facility 1 - Natural Gas Consumption (Sum)</div>
<div class="a" style="left:1807.5px;top:610px;width:23.5px;height:23px;background:#555555"></div>
<div class="t" style="left:1843.5px;top:609.5px;font-size:25px;color:#666;font-weight:400;letter-spacing:-0.06px;">Facility 1 - Renewable Energy Consumption (Sum)</div>
<svg class="a" style="left:0;top:0" width="2540" height="1588"><line x1="1197" y1="1395.9" x2="2299" y2="1395.9" stroke="#d8d8d8" stroke-width="2"/><line x1="1197" y1="1292.1" x2="2299" y2="1292.1" stroke="#d8d8d8" stroke-width="2"/><line x1="1197" y1="1188.4" x2="2299" y2="1188.4" stroke="#d8d8d8" stroke-width="2"/><line x1="1197" y1="1084.6" x2="2299" y2="1084.6" stroke="#d8d8d8" stroke-width="2"/><line x1="1197" y1="980.9" x2="2299" y2="980.9" stroke="#d8d8d8" stroke-width="2"/><line x1="1197" y1="877.1" x2="2299" y2="877.1" stroke="#d8d8d8" stroke-width="2"/><line x1="1197" y1="773.3" x2="2299" y2="773.3" stroke="#d8d8d8" stroke-width="2"/><line x1="1197" y1="669.6" x2="2299" y2="669.6" stroke="#d8d8d8" stroke-width="2"/><rect x="1197" y="669.6" width="1102" height="726.3" fill="none" stroke="#d0d0d0" stroke-width="2"/><rect x="1210.3" y="1235.6" width="15" height="160.3" fill="#1c1c1c"/><rect x="1230.3" y="1349.4" width="15" height="46.5" fill="#383838"/><rect x="1250.3" y="1188.4" width="15" height="207.5" fill="#555555"/><rect x="1293.9" y="941.1" width="15" height="454.8" fill="#1c1c1c"/><rect x="1313.9" y="1201.4" width="15" height="194.5" fill="#383838"/><rect x="1333.9" y="910.3" width="15" height="485.6" fill="#555555"/><rect x="1380.3" y="818.5" width="15" height="577.4" fill="#1c1c1c"/><rect x="1400.3" y="1162.4" width="15" height="233.5" fill="#383838"/><rect x="1420.3" y="744.8" width="15" height="651.1" fill="#555555"/><rect x="1463.9" y="812.3" width="15" height="583.6" fill="#1c1c1c"/><rect x="1483.9" y="1145.8" width="15" height="250.1" fill="#383838"/><rect x="1503.9" y="773.3" width="15" height="622.6" fill="#555555"/><rect x="1550.3" y="820.0" width="15" height="575.9" fill="#1c1c1c"/><rect x="1570.3" y="1178.0" width="15" height="217.9" fill="#383838"/><rect x="1590.3" y="750.0" width="15" height="645.9" fill="#555555"/><rect x="1636.7" y="903.6" width="15" height="492.3" fill="#1c1c1c"/><rect x="1656.7" y="1201.4" width="15" height="194.5" fill="#383838"/><rect x="1676.7" y="852.2" width="15" height="543.7" fill="#555555"/><rect x="1720.3" y="937.3" width="15" height="458.6" fill="#1c1c1c"/><rect x="1740.3" y="1248.6" width="15" height="147.3" fill="#383838"/><rect x="1760.3" y="855.8" width="15" height="540.1" fill="#555555"/><rect x="1806.7" y="935.2" width="15" height="460.7" fill="#1c1c1c"/><rect x="1826.7" y="1223.1" width="15" height="172.8" fill="#383838"/><rect x="1846.7" y="880.2" width="15" height="515.7" fill="#555555"/><rect x="1890.3" y="867.8" width="15" height="528.1" fill="#1c1c1c"/><rect x="1910.3" y="1201.4" width="15" height="194.5" fill="#383838"/><rect x="1930.3" y="796.7" width="15" height="599.2" fill="#555555"/><rect x="1976.7" y="902.0" width="15" height="493.9" fill="#1c1c1c"/><rect x="1996.7" y="1238.7" width="15" height="157.2" fill="#383838"/><rect x="2016.7" y="814.3" width="15" height="581.6" fill="#555555"/><rect x="2063.1" y="905.1" width="15" height="490.8" fill="#1c1c1c"/><rect x="2083.1" y="1209.1" width="15" height="186.8" fill="#383838"/><rect x="2103.1" y="846.0" width="15" height="549.9" fill="#555555"/><rect x="2143.9" y="967.4" width="15" height="428.5" fill="#1c1c1c"/><rect x="2163.9" y="1242.3" width="15" height="153.6" fill="#383838"/><rect x="2183.9" y="907.2" width="15" height="488.7" fill="#555555"/><rect x="2230.3" y="1073.7" width="15" height="322.2" fill="#1c1c1c"/><rect x="2250.3" y="1277.1" width="15" height="118.8" fill="#383838"/><rect x="2270.3" y="1032.7" width="15" height="363.2" fill="#555555"/><line x1="1237.8" y1="1235.6" x2="2257.8" y2="1073.7" stroke="#c0474f" stroke-width="4" stroke-dasharray="16 11"/></svg>
<div class="t" style="left:1196px;top:1171.6px;width:89px;height:44.5px;background:#1c1c1c;color:#fff;font-size:23px;text-align:center;line-height:45px;-webkit-text-stroke:0.8px #fff;letter-spacing:0.6px">309K</div>
<div class="t" style="left:1196px;top:1284.8px;width:95px;height:44.5px;background:#383838;color:#fff;font-size:23px;text-align:center;line-height:45px;-webkit-text-stroke:0.8px #fff;letter-spacing:0.6px">89.7K</div>
<div class="t" style="left:1364.7px;top:1143.5px;width:89.2px;height:44.5px;background:#c0474f;color:#fff;font-size:23px;text-align:center;line-height:45px;-webkit-text-stroke:0.8px #fff;letter-spacing:0.6px">361K</div>
<div class="t" style="left:1257.4px;top:875.4px;width:89px;height:44.5px;background:#1c1c1c;color:#fff;font-size:23px;text-align:center;line-height:45px;-webkit-text-stroke:0.8px #fff;letter-spacing:0.6px">876K</div>
<div class="t" style="left:1339px;top:753px;width:98.6px;height:44.5px;background:#1c1c1c;color:#fff;font-size:23px;text-align:center;line-height:45px;-webkit-text-stroke:0.8px #fff;letter-spacing:0.6px">1.12M</div>
<div class="t" style="left:1378.5px;top:678.9px;width:99.3px;height:44.5px;background:#555555;color:#fff;font-size:23px;text-align:center;line-height:45px;-webkit-text-stroke:0.8px #fff;letter-spacing:0.6px">1.26M</div>
<div class="t" style="left:1507.8px;top:755px;width:98.1px;height:44.5px;background:#1c1c1c;color:#fff;font-size:23px;text-align:center;line-height:45px;-webkit-text-stroke:0.8px #fff;letter-spacing:0.6px">1.11M</div>
<div class="t" style="left:1548px;top:685.1px;width:98px;height:44.5px;background:#555555;color:#fff;font-size:23px;text-align:center;line-height:45px;-webkit-text-stroke:0.8px #fff;letter-spacing:0.6px">1.24M</div>
<div class="t" style="left:1600.8px;top:838px;width:89.2px;height:44.5px;background:#1c1c1c;color:#fff;font-size:23px;text-align:center;line-height:45px;-webkit-text-stroke:0.8px #fff;letter-spacing:0.6px">950K</div>
<div class="t" style="left:1634.8px;top:786.4px;width:98.8px;height:44.5px;background:#555555;color:#fff;font-size:23px;text-align:center;line-height:45px;-webkit-text-stroke:0.8px #fff;letter-spacing:0.6px">1.05M</div>
<div class="t" style="left:1533.7px;top:1117.5px;width:88.5px;height:44.5px;background:#c0474f;color:#fff;font-size:23px;text-align:center;line-height:45px;-webkit-text-stroke:0.8px #fff;letter-spacing:0.6px">413K</div>
<div class="t" style="left:1704.4px;top:1089.8px;width:88.7px;height:44.5px;background:#c0474f;color:#fff;font-size:23px;text-align:center;line-height:45px;-webkit-text-stroke:0.8px #fff;letter-spacing:0.6px">465K</div>
<div class="t" style="left:1704.4px;top:1185.9px;width:88.7px;height:44.5px;background:#383838;color:#fff;font-size:23px;text-align:center;line-height:45px;-webkit-text-stroke:0.8px #fff;letter-spacing:0.6px">284K</div>
<div class="t" style="left:1771.8px;top:869.4px;width:89.2px;height:44.5px;background:#1c1c1c;color:#fff;font-size:23px;text-align:center;line-height:45px;-webkit-text-stroke:0.8px #fff;letter-spacing:0.6px">888K</div>
<div class="t" style="left:1849.2px;top:802.5px;width:98.1px;height:44.5px;background:#1c1c1c;color:#fff;font-size:23px;text-align:center;line-height:45px;-webkit-text-stroke:0.8px #fff;letter-spacing:0.6px">1.02M</div>
<div class="t" style="left:1889px;top:731.1px;width:98.5px;height:44.5px;background:#555555;color:#fff;font-size:23px;text-align:center;line-height:45px;-webkit-text-stroke:0.8px #fff;letter-spacing:0.6px">1.15M</div>
<div class="t" style="left:1874.9px;top:1062.2px;width:88.7px;height:44.5px;background:#c0474f;color:#fff;font-size:23px;text-align:center;line-height:45px;-webkit-text-stroke:0.8px #fff;letter-spacing:0.6px">517K</div>
<div class="t" style="left:1874.9px;top:1137.6px;width:88.7px;height:44.5px;background:#383838;color:#fff;font-size:23px;text-align:center;line-height:45px;-webkit-text-stroke:0.8px #fff;letter-spacing:0.6px">375K</div>
<div class="t" style="left:2027.7px;top:840.5px;width:88.8px;height:44.5px;background:#1c1c1c;color:#fff;font-size:23px;text-align:center;line-height:45px;-webkit-text-stroke:0.8px #fff;letter-spacing:0.6px">946K</div>
<div class="t" style="left:2061.4px;top:780.7px;width:98.8px;height:44.5px;background:#555555;color:#fff;font-size:23px;text-align:center;line-height:45px;-webkit-text-stroke:0.8px #fff;letter-spacing:0.6px">1.06M</div>
<div class="t" style="left:2047.5px;top:1036.4px;width:89.3px;height:44.5px;background:#c0474f;color:#fff;font-size:23px;text-align:center;line-height:45px;-webkit-text-stroke:0.8px #fff;letter-spacing:0.6px">569K</div>
<div class="t" style="left:2047.5px;top:1145.3px;width:89.3px;height:44.5px;background:#383838;color:#fff;font-size:23px;text-align:center;line-height:45px;-webkit-text-stroke:0.8px #fff;letter-spacing:0.6px">360K</div>
<div class="t" style="left:2107.4px;top:901.8px;width:88.5px;height:44.5px;background:#1c1c1c;color:#fff;font-size:23px;text-align:center;line-height:45px;-webkit-text-stroke:0.8px #fff;letter-spacing:0.6px">827K</div>
<div class="t" style="left:2146.8px;top:841.5px;width:88.8px;height:44.5px;background:#555555;color:#fff;font-size:23px;text-align:center;line-height:45px;-webkit-text-stroke:0.8px #fff;letter-spacing:0.6px">942K</div>
<div class="t" style="left:2194.1px;top:1008.8px;width:89.2px;height:44.5px;background:#1c1c1c;color:#fff;font-size:23px;text-align:center;line-height:45px;-webkit-text-stroke:0.8px #fff;letter-spacing:0.6px">621K</div>
<div class="t" style="left:2210.4px;top:1213.1px;width:89px;height:44.5px;background:#383838;color:#fff;font-size:23px;text-align:center;line-height:45px;-webkit-text-stroke:0.8px #fff;letter-spacing:0.6px">229K</div>
<div class="t" style="left:1074px;width:101px;text-align:right;top:1387.1px;font-size:23px;color:#666;letter-spacing:1px">0M</div>
<div class="t" style="left:2321px;top:1387.1px;font-size:23px;color:#666;letter-spacing:1px">0M</div>
<div class="t" style="left:1074px;width:101px;text-align:right;top:1283.4px;font-size:23px;color:#666;letter-spacing:1px">0.2M</div>
<div class="t" style="left:2321px;top:1283.4px;font-size:23px;color:#666;letter-spacing:1px">0.2M</div>
<div class="t" style="left:1074px;width:101px;text-align:right;top:1179.6px;font-size:23px;color:#666;letter-spacing:1px">0.4M</div>
<div class="t" style="left:2321px;top:1179.6px;font-size:23px;color:#666;letter-spacing:1px">0.4M</div>
<div class="t" style="left:1074px;width:101px;text-align:right;top:1075.9px;font-size:23px;color:#666;letter-spacing:1px">0.6M</div>
<div class="t" style="left:2321px;top:1075.9px;font-size:23px;color:#666;letter-spacing:1px">0.6M</div>
<div class="t" style="left:1074px;width:101px;text-align:right;top:972.1px;font-size:23px;color:#666;letter-spacing:1px">0.8M</div>
<div class="t" style="left:2321px;top:972.1px;font-size:23px;color:#666;letter-spacing:1px">0.8M</div>
<div class="t" style="left:1074px;width:101px;text-align:right;top:868.3px;font-size:23px;color:#666;letter-spacing:1px">1M</div>
<div class="t" style="left:2321px;top:868.3px;font-size:23px;color:#666;letter-spacing:1px">1M</div>
<div class="t" style="left:1074px;width:101px;text-align:right;top:764.6px;font-size:23px;color:#666;letter-spacing:1px">1.2M</div>
<div class="t" style="left:2321px;top:764.6px;font-size:23px;color:#666;letter-spacing:1px">1.2M</div>
<div class="t" style="left:1074px;width:101px;text-align:right;top:660.8px;font-size:23px;color:#666;letter-spacing:1px">1.4M</div>
<div class="t" style="left:2321px;top:660.8px;font-size:23px;color:#666;letter-spacing:1px">1.4M</div>
<div class="t" style="left:1074.5px;top:1079px;font-size:30px;color:#666;transform-origin:0 0;transform:rotate(-90deg)">Values</div>
<div class="t" style="left:2390px;top:756px;font-size:31.6px;color:#666;transform-origin:0 0;transform:rotate(90deg) translateY(-100%)">Renewable Energy Consumption (Sum)</div>
<div class="t" style="left:1171.4px;width:300px;text-align:center;top:1422.9px;font-size:23px;line-height:23px;color:#666;white-space:normal;letter-spacing:0.9px">May 2023</div>
<div class="t" style="left:1341.4px;width:300px;text-align:center;top:1422.9px;font-size:23px;line-height:23px;color:#666;white-space:normal;letter-spacing:0.9px">July 2023</div>
<div class="t" style="left:1514.2px;width:300px;text-align:center;top:1422.9px;font-size:23px;line-height:23px;color:#666;white-space:normal;letter-spacing:0.9px">September<br>2023</div>
<div class="t" style="left:1684.2px;width:300px;text-align:center;top:1422.9px;font-size:23px;line-height:23px;color:#666;white-space:normal;letter-spacing:0.9px">November<br>2023</div>
<div class="t" style="left:1854.2px;width:300px;text-align:center;top:1422.9px;font-size:23px;line-height:23px;color:#666;white-space:normal;letter-spacing:0.9px">January 2024</div>
<div class="t" style="left:2021.4px;width:300px;text-align:center;top:1422.9px;font-size:23px;line-height:23px;color:#666;white-space:normal;letter-spacing:0.9px">March 2024</div></div></body></html>
